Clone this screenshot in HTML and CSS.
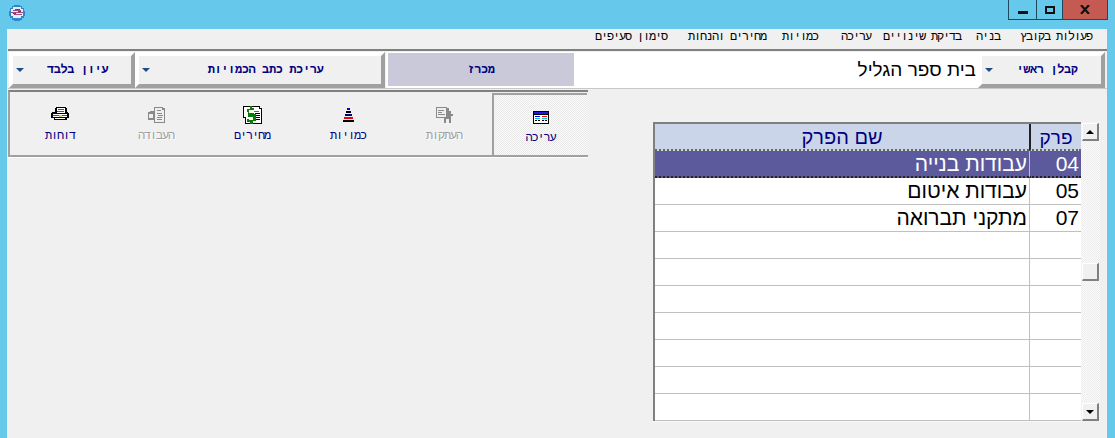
FILE: index.html
```html
<!DOCTYPE html>
<html lang="he">
<head>
<meta charset="utf-8">
<title>בית ספר הגליל</title>
<link rel="stylesheet" href="styles.css">
</head>
<body>
<div class="window">
  <header class="titlebar">
    <svg class="app-icon" width="16" height="16" viewBox="0 0 16 16" shape-rendering="crispEdges">
      <path d="M5 0h6v1h2v2h2v3h1v5h-1v2h-2v2h-2v1H5v-1H3v-2H1v-2H0V6h1V3h2V1h2z" fill="#2f86cc"/>
      <path d="M4 2h8v2h2v7h-2v2H4v-2H2V4h2z" fill="#e6ebf3"/>
      <path d="M4 5h8v1H4zM2 7h12v1H2zM5 9h8v1H5z" fill="#a2507f"/>
      <path d="M6 4h5v1H6zM4 8h3v1H4zM9 6h3v1H9z" fill="#6a3a70"/>
    </svg>
    <div class="win-buttons">
      <div class="win-btn win-min"><span class="glyph-min"></span></div>
      <div class="win-btn win-max"><span class="glyph-max"></span></div>
      <div class="win-btn win-close">
        <svg width="10" height="9" viewBox="0 0 10 9"><path d="M1 0l8 9M9 0l-8 9" stroke="#111" stroke-width="2.2" fill="none"/></svg>
      </div>
    </div>
  </header>
  <div class="client">
    <nav class="menu" dir="rtl">
      <span class="m1">פעולות בקובץ</span>
      <span class="m2">בניה</span>
      <span class="m3">בדיקת שינויים</span>
      <span class="m4">עריכה</span>
      <span class="m5">כמויות</span>
      <span class="m6">מחירים והנחות</span>
      <span class="m7">סימון סעיפים</span>
    </nav>
    <div class="toolbar">
      <button class="bevel w-view"><span class="arrow"></span><span class="bevel-label" dir="rtl">עיון בלבד</span></button>
      <button class="bevel w-edit"><span class="arrow"></span><span class="bevel-label" dir="rtl">עריכת כתב הכמויות</span></button>
      <div class="pressed" dir="rtl">מכרז</div>
      <div class="project" dir="rtl">בית ספר הגליל</div>
      <button class="bevel w-main"><span class="arrow"></span><span class="bevel-label" dir="rtl">קבלן ראשי</span></button>
    </div>
    <main class="work">
      <section class="tools">
        <div class="tool">
          <svg width="18" height="16" viewBox="0 0 18 16" shape-rendering="crispEdges"><path d="M5 0h10v1h1v4h1v1h1v5h-2v2H3v-2H0V6h1V5h3V1h1z" fill="#000"/><path d="M6 1h8v5H6zM2 7h14v3H2zM4 11h10v1H4z" fill="#fff"/><path d="M7 2h6v1H7zM6 4h7v1H6zM2 8h14v1H2z" fill="#555"/><path d="M8 8h3v2H8z" fill="#f0d000"/></svg>
          <span dir="rtl">דוחות</span>
        </div>
        <div class="tool off">
          <svg width="17" height="17" viewBox="0 0 17 17" shape-rendering="crispEdges"><path d="M6 0h9v1h2v15H6v-3H0V5h2V4h4z" fill="#8a8a8a"/><path d="M7 1h7v2h2v12H7zM1 7h4v4H1z" fill="#efefef"/><path d="M9 3h4v1H9zM9 6h5v1H9zM10 8h5v1h-5zM9 10h5v1H9zM9 12h5v1H9z" fill="#8a8a8a"/></svg>
          <span dir="rtl">העבודה</span>
        </div>
        <div class="tool">
          <svg width="19" height="18" viewBox="0 0 19 18" shape-rendering="crispEdges"><path d="M0 0h17v2h2v16H2v-6H0z" fill="#000"/><path d="M1 1h15v10H1zM3 3h15v14H3z" fill="#fff"/><path d="M11 5h5v1h-5z" fill="#d33"/><path d="M12 7h5v1h-5zM12 9h5v1h-5zM12 11h5v1h-5zM12 13h5v1h-5z" fill="#000"/><path d="M7 0h2v2h2v2H6v3h5v1h2v7h-3v3H7v-2H4v-3h2v1h4v-3H5V6H4V3h3z" fill="#0a7a0a"/></svg>
          <span dir="rtl">מחירים</span>
        </div>
        <div class="tool">
          <svg width="11" height="14" viewBox="0 0 11 14" shape-rendering="crispEdges"><path d="M4 0h3v2H4z" fill="#0000e0"/><path d="M3 3h5v2H3z" fill="#000"/><path d="M2 6h7v2H2z" fill="#000080"/><path d="M1 9h9v2H1z" fill="#f00000"/><path d="M0 12h11v2H0z" fill="#000"/></svg>
          <span dir="rtl">כמויות</span>
        </div>
        <div class="tool off">
          <svg width="17" height="16" viewBox="0 0 17 16" shape-rendering="crispEdges"><path d="M0 0h11v1h2v3h2v3h2v2h-2v7h-2v-4h-3v4H8v-5H0z" fill="#8a8a8a"/><path d="M1 1h9v9H1z" fill="#efefef"/><path d="M2 3h6v1H2zM2 5h4v1H2zM2 7h7v1H2z" fill="#8a8a8a"/></svg>
          <span dir="rtl">העתקות</span>
        </div>
        <div class="tool active">
          <svg width="16" height="13" viewBox="0 0 16 13" shape-rendering="crispEdges"><path d="M0 0h16v13H0z" fill="#000"/><path d="M1 1h14v2H1z" fill="#1a1ae0"/><path d="M1 4h14v8H1z" fill="#fff"/><path d="M2 5h5v1H2z" fill="#00f"/><path d="M9 5h5v1H9z" fill="#f00"/><path d="M2 7h5v1H2zM9 7h5v1H9z" fill="#0cc"/><path d="M2 9h2v1H2zM5 9h2v1H5zM9 9h2v1H9zM12 9h2v1h-2z" fill="#000"/></svg>
          <span dir="rtl">עריכה</span>
        </div>
      </section>
      <section class="grid-wrap">
        <div class="grid" dir="rtl">
          <div class="cell head col-num">פרק</div><div class="cell head col-name">שם הפרק</div>
          <div class="cell sel col-num">04</div><div class="cell sel col-name">עבודות בנייה</div>
          <div class="cell col-num">05</div><div class="cell col-name">עבודות איטום</div>
          <div class="cell col-num">07</div><div class="cell col-name">מתקני תברואה</div>
          <div class="cell col-num"></div><div class="cell col-name"></div>
          <div class="cell col-num"></div><div class="cell col-name"></div>
          <div class="cell col-num"></div><div class="cell col-name"></div>
          <div class="cell col-num"></div><div class="cell col-name"></div>
          <div class="cell col-num"></div><div class="cell col-name"></div>
          <div class="cell col-num"></div><div class="cell col-name"></div>
          <div class="cell col-num"></div><div class="cell col-name"></div>
        </div>
        <div class="scrollbar">
          <div class="sb-btn"><span class="tri-up"></span></div>
          <div class="sb-thumb"></div>
          <div class="sb-btn"><span class="tri-down"></span></div>
        </div>
      </section>
    </main>
  </div>
</div>
</body>
</html>
```
FILE: styles.css
```css
* { box-sizing: border-box; }
html, body { margin: 0; padding: 0; }
body { width: 1115px; height: 438px; overflow: hidden; font-family: "Liberation Sans", sans-serif; }
.window { width: 1115px; height: 438px; background: #66c9ec; display: flex; flex-direction: column; }
.titlebar { height: 29px; flex: none; display: flex; justify-content: space-between; align-items: flex-start; padding-left: 9px; padding-right: 7px; }
.app-icon { margin-top: 5px; }
.win-buttons { display: flex; height: 20px; border: 1px solid #1d4a5c; border-top: 0; }
.win-btn { display: flex; align-items: center; justify-content: center; border-left: 1px solid #1d4a5c; }
.win-min { width: 27px; border-left: 0; }
.win-max { width: 26px; }
.win-close { width: 45px; background: #c45a52; }
.glyph-min { width: 10px; height: 3px; background: #111; margin-top: 6px; }
.glyph-max { width: 10px; height: 8px; border: 2px solid #111; }
.client { flex: 1; margin: 0 8px 0 7px; background: #f0f0f0; display: flex; flex-direction: column; }
.menu { height: 20px; flex: none; display: flex; padding-right: 15px; padding-bottom: 4px; align-items: center; font: 12px "Liberation Mono", monospace; letter-spacing: -1.2px; color: #000; }
.m1 { margin-left: 20px; }
.m2 { margin-left: 15px; }
.m3 { margin-left: 12px; }
.m4 { margin-left: 23px; }
.m5 { margin-left: 16px; }
.m6 { margin-left: 21px; }
.toolbar { height: 40px; flex: none; display: flex; margin-left: 1px; border-top: 2px solid #808080; padding: 1px 2px 0 1px; border-bottom: 1px solid #c8c8c8; }
.bevel { height: 36px; flex: none; display: flex; align-items: center; padding: 0; background: #f0f0f0; border-style: solid; border-width: 4px; border-color: #fff #a0a0a0 #a0a0a0 #fff; font: bold 12px "Liberation Mono", monospace; color: #000080; }
.w-view { width: 126px; }
.w-edit { width: 250px; margin-right: 1px; }
.w-main { width: 127px; }
.arrow { width: 0; height: 0; border: 4px solid transparent; border-top: 4px solid #1a4d8c; border-bottom: 0; margin-left: 3px; flex: none; }
.bevel-label { flex: 1; text-align: center; letter-spacing: -0.4px; }
.pressed { width: 189px; height: 36px; flex: none; background: #c9c9da; border: 1px solid #fff; border-width: 1px 1px 2px 2px; display: flex; align-items: center; justify-content: center; font: bold 12px "Liberation Mono", monospace; color: #000080; letter-spacing: -0.4px; }
.project { flex: 1; height: 36px; background: #fff; display: flex; align-items: center; padding-right: 2px; font-size: 19px; color: #000; white-space: nowrap; }
.work { flex: 1; display: flex; justify-content: space-between; align-items: flex-start; }
.tools { margin: 1px 0 0 1px; width: 580px; height: 67px; display: flex; padding-left: 2px; border: solid #a0a0a0; border-width: 2px 0 2px 2px; border-top-color: #808080; box-shadow: 0 1px 0 #fff; }
.tool { width: 96px; flex: none; display: flex; flex-direction: column; align-items: center; padding-top: 14px; font: 12px "Liberation Mono", monospace; letter-spacing: -1.2px; color: #000080; height: 63px; }
.tool svg { height: 18px; flex: none; margin-bottom: 5px; }
.tool.off { color: #a0a0a0; text-shadow: 1px 1px 0 #fff; }
.tool.active { width: 95px; height: 62px; margin-top: 1px; background-color: #f4f4f4; background-image: repeating-conic-gradient(#e8e8e8 0 25%, #fbfbfb 0 50%); background-size: 2px 2px; border-top: 2px solid #a0a0a0; border-left: 2px solid #a0a0a0; padding-top: 13px; }
.grid-wrap { display: flex; margin-top: 33px; padding-right: 7px; align-items: flex-start; }
.grid { width: 428px; height: 299px; display: grid; grid-template-columns: 52px 1fr; grid-auto-rows: 27px; align-content: start; background: #fff; border: solid #808080; border-width: 2px 0 0 2px; box-shadow: 0 1px 0 #f8f8f8; }
.cell { border-bottom: 1px solid #c0c0c0; display: flex; align-items: center; padding: 0 2px; font-size: 21px; color: #000; }
.col-num { border-left: 1px solid #c0c0c0; }
.head { background: #cad5ea; color: #000080; border-bottom: 2px dotted #666; padding-top: 2px; justify-content: center; font-size: 20px; }
.head.col-num { border-left: 2px solid #222; font-size: 19px; }
.sel { background: #5c5a9c; color: #fff; border-bottom: 2px dotted #222; }
.scrollbar { width: 19px; height: 299px; padding: 1px 0 0 1px; display: flex; flex-direction: column; justify-content: space-between; background-color: #f6f6f6; background-image: repeating-conic-gradient(#ececec 0 25%, #fbfbfb 0 50%); background-size: 2px 2px; }
.sb-btn, .sb-thumb { width: 17px; height: 18px; background: #f0f0f0; border-style: solid; border-width: 1px 2px 2px 1px; border-color: #fff #808080 #808080 #fff; display: flex; align-items: center; justify-content: center; flex: none; }
.tri-up, .tri-down { width: 0; height: 0; border: 4px solid transparent; }
.tri-up { border-bottom-color: #000; border-top: 0; }
.tri-down { border-top-color: #000; border-bottom: 0; }
```
